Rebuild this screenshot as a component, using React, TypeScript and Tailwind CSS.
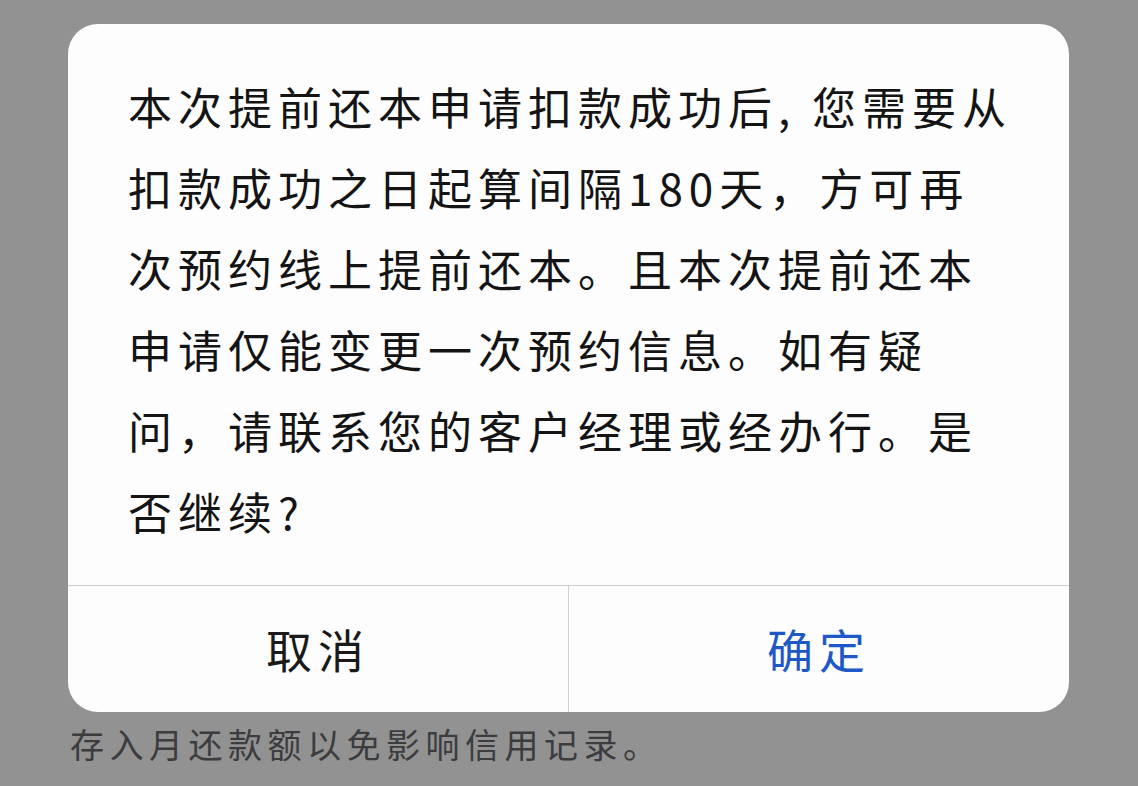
const lines = [
  '本次提前还本申请扣款成功后, 您需要从',
  '扣款成功之日起算间隔180天，方可再',
  '次预约线上提前还本。且本次提前还本',
  '申请仅能变更一次预约信息。如有疑',
  '问，请联系您的客户经理或经办行。是',
  '否继续?',
];

export default function App() {
  return (
    <div
      className="h-[786px] w-full overflow-hidden bg-[#929293] pt-[24px] pl-[68px]"
      style={{ fontFamily: '"Noto Sans CJK SC", "Noto Sans", sans-serif' }}
    >
      {/* Confirm dialog */}
      <div className="w-[1001px] rounded-[30px] bg-[#fdfdfe] overflow-hidden">
        <div className="pt-[42px] pb-[33px] pl-[60px] text-[44px] leading-[81px] tracking-[6px] text-[#141414]">
          {lines.map((l) => (
            <div key={l} className="whitespace-nowrap">{l}</div>
          ))}
        </div>
        <div className="flex h-[127px] border-t border-[#cfcfd3]">
          <button className="flex-1 flex items-center justify-center pb-[2px] text-[46px] tracking-[6px] text-[#1a1a1a]">
            取消
          </button>
          <div className="w-px bg-[#cfcfd3]" />
          <button className="flex-1 flex items-center justify-center pb-[2px] text-[46px] tracking-[6px] text-[#1d58c6]">
            确定
          </button>
        </div>
      </div>
      {/* Page text peeking out below the dialog */}
      <p className="ml-[2px] mt-[10px] text-[34px] leading-[44px] tracking-[5.5px] text-[#3c3c3e]">
        存入月还款额以免影响信用记录。
      </p>
    </div>
  );
}
